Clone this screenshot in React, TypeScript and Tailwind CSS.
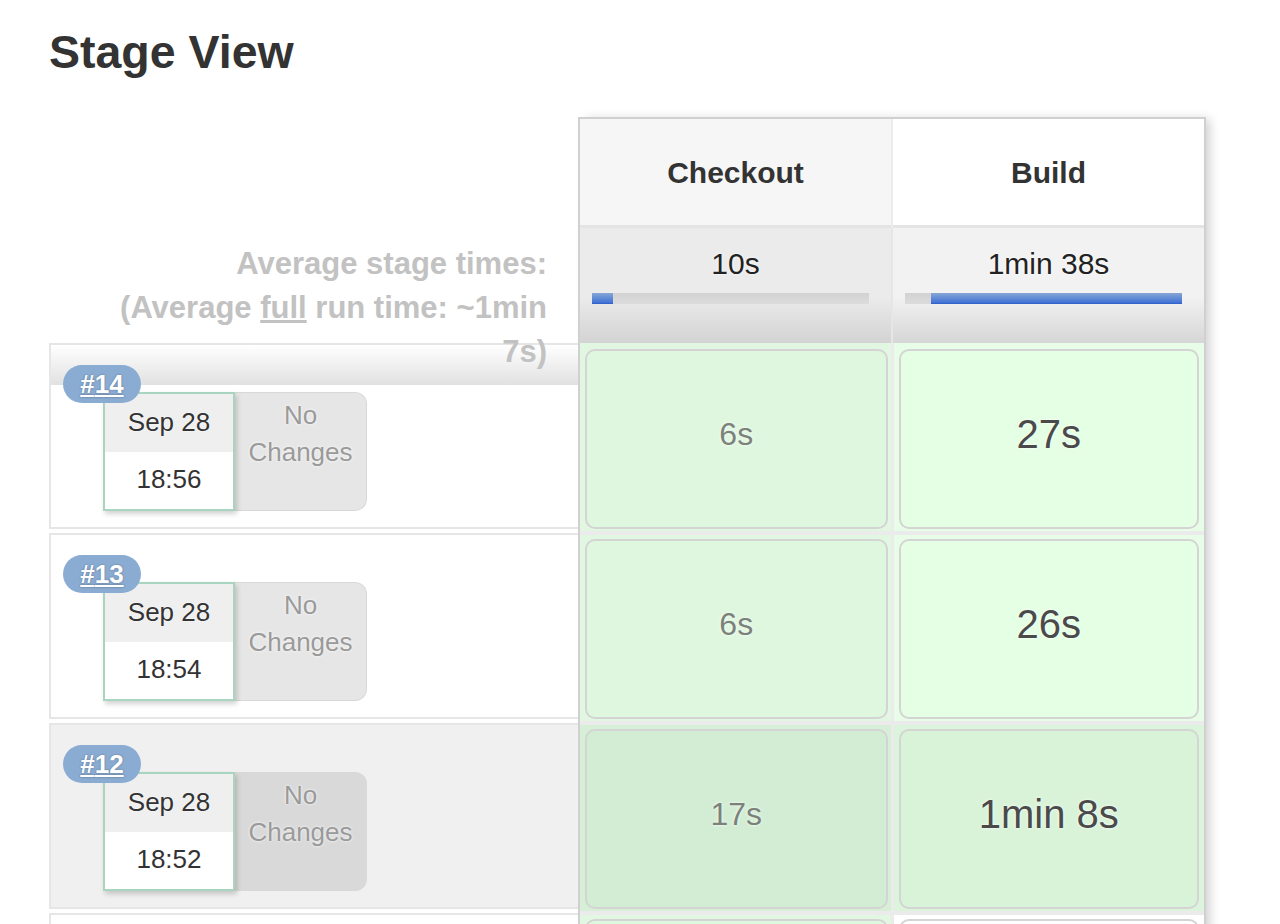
import React from 'react';

type Run = {
    id: number;
    date: string;
    time: string;
    checkout: string;
    build: string;
    tone: 'normal' | 'hover' | 'last';
};

const runs: Run[] = [
    { id: 14, date: 'Sep 28', time: '18:56', checkout: '6s', build: '27s', tone: 'normal' },
    { id: 13, date: 'Sep 28', time: '18:54', checkout: '6s', build: '26s', tone: 'normal' },
    { id: 12, date: 'Sep 28', time: '18:52', checkout: '17s', build: '1min 8s', tone: 'hover' },
    // only the top edge of this row is in view
    { id: 11, date: '', time: '', checkout: '', build: '', tone: 'last' },
];

const RunInfo: React.FC<{ run: Run; first: boolean }> = ({ run, first }) => {
    const hover = run.tone === 'hover';
    if (run.tone === 'last') {
        return <div className="h-[186px] border-2 border-r-0 border-[#e6e6e6] bg-white" />;
    }
    return (
        <div className={`relative h-[186px] mb-[4px] border-2 border-r-0 border-[#e6e6e6] pl-[12px] pt-[20px] ${hover ? 'bg-[#f0f0f0]' : 'bg-white'}`}>
            {first && (
                <div className="absolute left-0 right-0 top-0 h-[40px] bg-gradient-to-b from-white to-[#e1e1e1]" />
            )}
            <div className="relative z-20 inline-flex h-[38px] w-[78px] items-center justify-center rounded-full bg-[#8aabd2]">
                <a href="#" className="text-[26px] font-bold text-white underline [text-shadow:0_0_2px_rgba(0,0,0,0.35)]">#{run.id}</a>
            </div>
            <div className="relative z-10 -mt-[11px] ml-[40px] flex">
                <div className="relative z-10 w-[132px] h-[119px] border-2 border-[#a9d4c0] bg-white text-center text-[26px] text-[#333] shadow-[2px_3px_5px_rgba(0,0,0,0.18)] [text-shadow:0_0_2px_#fff]">
                    <div className="h-[58px] bg-[#efefef] leading-[56px]">{run.date}</div>
                    <div className="h-[57px] leading-[55px]">{run.time}</div>
                </div>
                <div className={`w-[132px] h-[119px] rounded-r-[12px] border border-l-0 border-[#d8d8d8] pt-[4px] text-center text-[26px] leading-[37px] text-[#9a9a9a] [text-shadow:0_0_3px_#fff] ${hover ? 'bg-[#d9d9d9]' : 'bg-[#e6e6e6]'}`}>
                    No
                    <br />
                    Changes
                </div>
            </div>
        </div>
    );
};

const Bar: React.FC<{ left: number; width: number }> = ({ left, width }) => (
    <div className="relative ml-[12px] h-[11px] w-[277px] bg-gradient-to-b from-[#d2d2d2] to-[#dcdcdc]">
        <div
            className="absolute top-0 h-[11px] bg-gradient-to-b from-[#87a6d4] to-[#3f70d6] border-b border-[#3464c8]"
            style={{ left, width }}
        />
    </div>
);

export default function App() {
    return (
        <div className="h-screen overflow-hidden bg-white pl-[49px] pt-[29px] font-['Liberation_Sans',Arial,sans-serif] text-[#333]">
            <h1 className="text-[46.5px] font-bold leading-[46px] text-[#333]">Stage View</h1>

            <div className="mt-[42px] flex">
                {/* left: summary + run info */}
                <div className="w-[529px] shrink-0">
                    <div className="relative z-30 h-[226px] pr-[31px] pt-[125px] text-right text-[31px] font-bold leading-[44px] text-[#c2c2c2]">
                        Average stage times:
                        <br />
                        (Average <span className="underline">full</span> run time: ~1min
                        <br />
                        7s)
                    </div>
                    {runs.map((run, i) => (
                        <RunInfo key={run.id} run={run} first={i === 0} />
                    ))}
                </div>

                {/* right: stage table */}
                <div className="w-[628px] shrink-0 border-2 border-b-0 border-[#d0d0d0] bg-[#ebebeb] shadow-[6px_0_10px_-2px_rgba(0,0,0,0.18)]">
                    <div className="grid h-[109px] grid-cols-2 gap-[2px] bg-[#ececec]">
                        <div className="flex items-center justify-center border-b-[3px] border-[#e4e4e4] bg-[#f6f6f6] text-[30px] font-bold text-[#333]">Checkout</div>
                        <div className="flex items-center justify-center border-b-[3px] border-[#e4e4e4] bg-white text-[30px] font-bold text-[#333]">Build</div>
                    </div>
                    <div className="grid h-[115px] grid-cols-2 gap-[2px] bg-[#e6e6e6]">
                        <div className="bg-gradient-to-b from-[#ebebeb] from-60% to-[#d3d3d3] pt-[18px]">
                            <div className="mb-[11px] text-center text-[30px] leading-[36px] text-[#222] [text-shadow:0_0_3px_#fff]">10s</div>
                            <Bar left={0} width={21} />
                        </div>
                        <div className="bg-gradient-to-b from-[#f2f2f2] from-60% to-[#d6d6d6] pt-[18px]">
                            <div className="mb-[11px] text-center text-[30px] leading-[36px] text-[#222] [text-shadow:0_0_3px_#fff]">1min 38s</div>
                            <Bar left={26} width={251} />
                        </div>
                    </div>

                    {runs.map((run, i) => {
                        const hover = run.tone === 'hover';
                        const last = run.tone === 'last';
                        return (
                            <div key={run.id} className="mb-[4px] grid grid-cols-2 gap-[3px]">
                                <div className={`pl-[5px] pr-[3px] pb-[2px] ${i === 0 ? 'pt-[6px]' : 'pt-[4px]'} ${hover ? 'bg-[#d6efd6]' : 'bg-[#e1f7e1]'}`}>
                                    <div className={`flex h-[180px] items-center justify-center rounded-[10px] border-2 border-[#d4d4d4] pb-[10px] text-[32px] text-[#7a827a] [text-shadow:0_0_3px_#fff] ${hover ? 'bg-[#d3edd4]' : 'bg-[#dff7df]'}`}>
                                        {run.checkout}
                                    </div>
                                </div>
                                <div className={`pl-[5px] pr-[5px] pb-[2px] ${i === 0 ? 'pt-[6px]' : 'pt-[4px]'} ${hover ? 'bg-[#dcf4dc]' : last ? 'bg-white' : 'bg-[#e7fde7]'}`}>
                                    <div className={`flex h-[180px] items-center justify-center rounded-[10px] border-2 border-[#d4d4d4] pb-[10px] text-[40px] text-[#4a4a4a] [text-shadow:0_0_3px_#fff] ${hover ? 'bg-[#d9f3d9]' : last ? 'bg-white' : 'bg-[#e4ffe4]'}`}>
                                        {run.build}
                                    </div>
                                </div>
                            </div>
                        );
                    })}
                </div>
            </div>
        </div>
    );
}
